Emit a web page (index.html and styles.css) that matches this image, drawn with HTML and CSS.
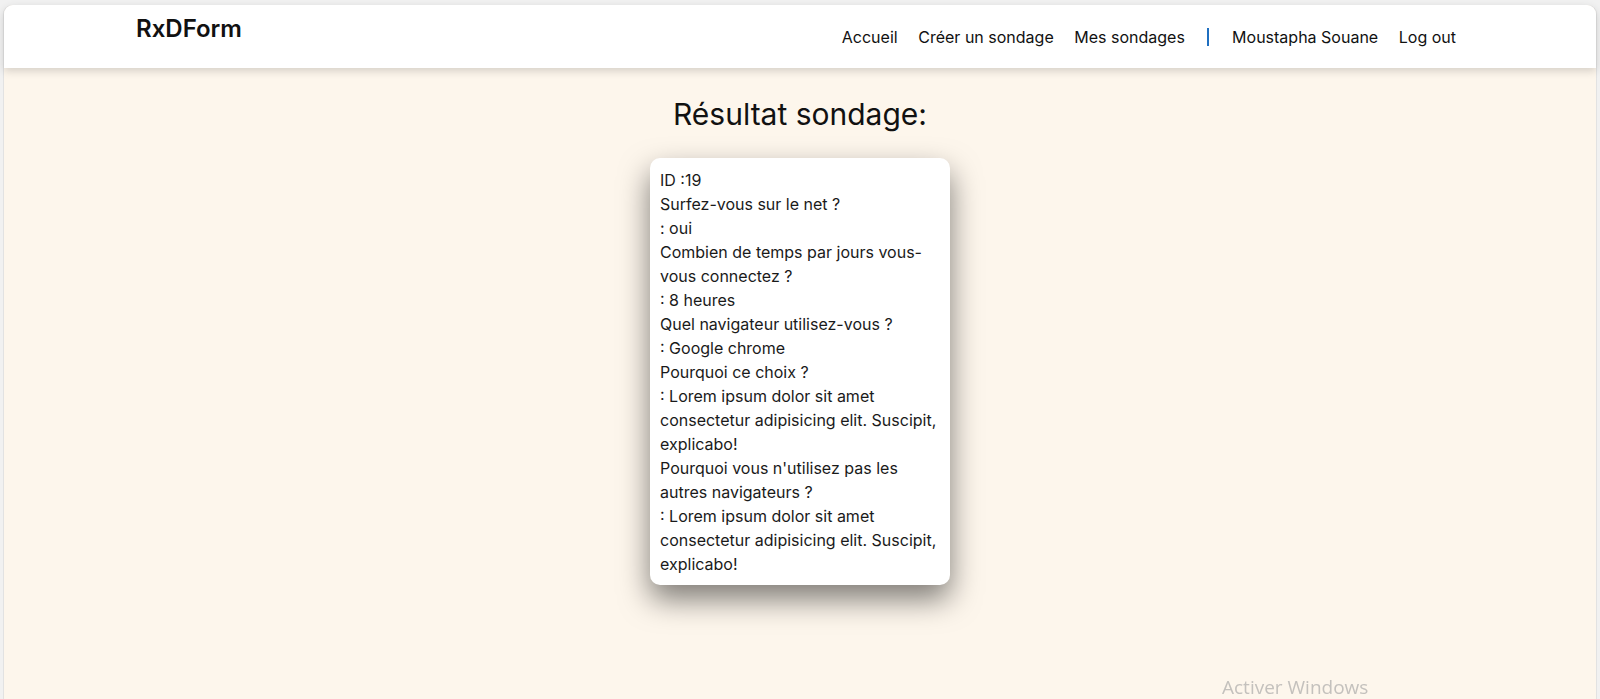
FILE: index.html
```html
<!DOCTYPE html>
<html lang="fr">
<head>
<meta charset="utf-8">
<title>RxDForm - Résultat sondage</title>
<link rel="stylesheet" href="styles.css">
</head>
<body>
<div class="frame">
  <header class="topbar">
    <div class="logo">RxDForm</div>
    <nav class="nav">
      <a href="#">Accueil</a>
      <a href="#">Créer un sondage</a>
      <a href="#">Mes sondages</a>
      <span class="sep"></span>
      <a href="#">Moustapha Souane</a>
      <a href="#">Log out</a>
    </nav>
  </header>
  <main class="content">
    <h1 class="title">Résultat sondage:</h1>
    <div class="card">
      <p>ID :19</p>
      <p>Surfez-vous sur le net ?</p>
      <p>: oui</p>
      <p>Combien de temps par jours vous-vous connectez ?</p>
      <p>: 8 heures</p>
      <p>Quel navigateur utilisez-vous ?</p>
      <p>: Google chrome</p>
      <p>Pourquoi ce choix ?</p>
      <p>: Lorem ipsum dolor sit amet consectetur adipisicing elit. Suscipit, explicabo!</p>
      <p>Pourquoi vous n'utilisez pas les autres navigateurs ?</p>
      <p>: Lorem ipsum dolor sit amet consectetur adipisicing elit. Suscipit, explicabo!</p>
    </div>
  </main>
</div>
<div class="watermark">Activer Windows</div>
</body>
</html>
```
FILE: styles.css
```css
html, body {
  margin: 0;
  padding: 0;
  height: 100%;
}
body {
  background: #f1f1f1;
  font-family: Inter, "Noto Sans", sans-serif;
  color: #111;
  overflow: hidden;
}
.frame {
  margin: 5px 4px 0 4px;
  min-height: calc(100vh - 5px);
  background: #fdf6ec;
  border-radius: 9px 9px 0 0;
  box-shadow: -1px 0 0 #e2e2e2, 1px 0 0 #e2e2e2;
  display: flex;
  flex-direction: column;
}
.topbar {
  height: 63px;
  background: #fff;
  border-radius: 9px 9px 0 0;
  box-shadow: 0 3px 8px rgba(0, 0, 0, 0.16);
  display: flex;
  justify-content: space-between;
  align-items: flex-start;
  padding: 0 140px 0 132px;
  position: relative;
  z-index: 1;
}
.logo {
  margin-top: 9px;
  font-size: 24px;
  font-weight: 600;
  color: #111;
  line-height: 29px;
}
.nav {
  margin-top: 22px;
  display: flex;
  align-items: center;
  gap: 20.6px;
  font-size: 16px;
  line-height: 20px;
}
.nav a {
  color: #111;
  text-decoration: none;
}
.sep {
  width: 2px;
  height: 18px;
  background: #1f6fc0;
  margin: 0 2px;
}
.content {
  display: flex;
  flex-direction: column;
  align-items: center;
}
.title {
  margin: 28px 0 26px;
  font-size: 30px;
  font-weight: 400;
  line-height: 36px;
  color: #111;
}
.card {
  width: 280px;
  padding: 10px 10px 9px;
  background: #fff;
  border-radius: 10px;
  box-shadow: 0 14px 30px rgba(0, 0, 0, 0.5);
  font-size: 16px;
  line-height: 24px;
  color: #1a1a1a;
}
.card p {
  margin: 0;
}
.watermark {
  position: fixed;
  left: 1222px;
  top: 674px;
  font-family: "Open Sans", "Noto Sans", sans-serif;
  font-size: 19px;
  color: #c4c1bd;
  white-space: nowrap;
}
```
